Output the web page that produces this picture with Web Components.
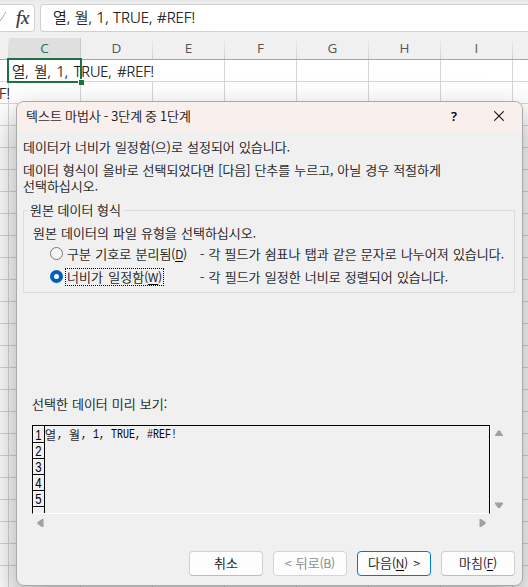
<!DOCTYPE html>
<html lang="ko">
<head>
<meta charset="utf-8">
<title>텍스트 마법사</title>
<style>
html,body{margin:0;height:100%;overflow:hidden}
body{background:#fff;font-family:"Noto Sans","Noto Sans CJK KR",sans-serif;color:#000}
</style>
</head>
<body>
<sheet-app></sheet-app>
<script>
const KR = '"Noto Sans CJK KR",sans-serif';
function define(name, html, setup) {
  const template = document.createElement('template');
  template.innerHTML = html;
  customElements.define(name, class extends HTMLElement {
    connectedCallback() {
      if (this.shadowRoot) return;
      this.attachShadow({mode: 'open'}).append(template.content.cloneNode(true));
      if (setup) setup(this, this.shadowRoot);
    }
  });
}

/* One line of text spread over a given width through its word gaps. */
define('text-line', `<style>
:host{display:block;white-space:nowrap;line-height:16px}
span{display:inline-block}
</style><span><slot></slot></span>`, (host, root) => {
  const span = root.querySelector('span');
  const width = +host.getAttribute('width');
  if (!width) return;
  const text = host.textContent.trim();
  const gaps = (text.match(/ /g) || []).length;
  const rest = width - span.getBoundingClientRect().width;
  if (gaps) span.style.wordSpacing = rest / gaps + 'px';
  else span.style.letterSpacing = rest / text.length + 'px';
});

/* Fixed-pitch text: 6px for a Latin character, 12px for a Hangul one. */
define('mono-text', `<style>
:host{display:flex;white-space:pre;height:17px;align-items:center}
span{font:10px/17px "Liberation Mono",monospace;transform:scaleY(1.35)}
b{width:12px;font:300 12px/17px "Noto Sans CJK KR",sans-serif;-webkit-text-stroke:.2px}
</style><b>열</b><span>, </span><b>월</b><span>, 1, TRUE, #REF!</span>`);

define('formula-bar', `<style>
:host{display:flex;gap:5px;height:39px;box-sizing:border-box;padding-top:4px;background:linear-gradient(#e8e8e8,#f0f0f0 4px)}
div{height:28px;box-sizing:border-box;border:1px solid #d1d1d1;background:#fff;display:flex;align-items:center}
.fx{width:35px;border-left:0;border-radius:0 4px 4px 0}
.in{flex:1;border-right:0;border-radius:4px 0 0 4px;padding:0 0 2px 12px;font:300 15px "Open Sans","Noto Sans CJK KR",sans-serif;-webkit-text-stroke:.2px;color:#000}
svg{display:block}
i{font:italic 19px "Liberation Serif",serif;color:#333;letter-spacing:-.3px;margin-left:9px;line-height:20px;-webkit-text-stroke:.2px}
</style><div class="fx"><svg width="7" height="12" viewBox="0 0 7 12"><path d="M-3 8L0 11 6 2" transform="translate(0 -2)" fill="none" stroke="#aaa"/></svg><i>fx</i></div>
<div class="in"><text-line width="142">열, 월, 1, TRUE, #REF!</text-line></div>`);

define('column-head', `<style>
:host{display:flex;justify-content:center;align-items:center;height:21px;padding:0 1px 2px 0;box-sizing:border-box;font:13.5px "Open Sans",sans-serif;color:#555;background:linear-gradient(#f0f0f0,#cfcfcf) right/1px 100% no-repeat}
:host([selected]){background:linear-gradient(#c8c8c8,#c8c8c8) right/1px 100% no-repeat,#dfdfdf;color:#217346}
</style><slot></slot>`);

define('sheet-grid', `<style>
:host{display:block;flex:1;background:#fff}
.heads{display:grid;grid-template-columns:9px repeat(8,72px);background:#f0f0f0;border-bottom:1px solid #a6a6a6}
.cells{position:relative;height:527px;font:300 14.5px "Open Sans","Noto Sans CJK KR",sans-serif;-webkit-text-stroke:.2px;background:linear-gradient(transparent 21px,#d6d6d6 21px) 0 0/100% 22px,linear-gradient(90deg,transparent 71px,#d6d6d6 71px) 9px 0/72px 100%}
.ref{display:flex;flex-direction:column;height:44px;width:165px}
.row{height:22px;padding-top:2px;box-sizing:border-box;display:flex;align-items:center}
.mask{background:linear-gradient(#fff,#fff) 78px 0/76px 21px no-repeat;padding-left:12px}
.sel{position:absolute;left:7px;top:-2px;width:71px;height:21px;border:2px solid #1e7145}
.sel::after{content:"";position:absolute;right:-4px;bottom:-4px;width:5px;height:5px;background:#1e7145;border:solid #fff;border-width:1px 0 0 1px}
</style><div class="heads"><column-head></column-head><column-head selected>C</column-head><column-head>D</column-head><column-head>E</column-head><column-head>F</column-head><column-head>G</column-head><column-head>H</column-head><column-head>I</column-head><column-head></column-head></div>
<div class="cells"><div class="ref"><div class="row mask"><text-line width="142">열, 월, 1, TRUE, #REF!</text-line></div><div class="row"><text-line width="11" style="margin-left:-1px">F!</text-line></div></div><div class="sel"></div></div>`);

define('title-bar', `<style>
:host{display:flex;align-items:center;height:30px;padding:0 18px 2px 9px;box-sizing:border-box;background:#f9f0ee}
text-line{flex:1}
b{font:600 13px "Noto Sans",sans-serif;margin-right:37px;-webkit-text-stroke:0}
</style><text-line width="165">텍스트 마법사 - 3단계 중 1단계</text-line><b>?</b><svg width="10" height="10"><path d="M.3.3l9.4 9.4M9.7.3L.3 9.7" stroke="#111" stroke-width="1.1"/></svg>`);

define('radio-choice', `<style>
:host{display:grid;grid-template-columns:17px 133px 1fr;align-items:center;height:23px}
i{box-sizing:border-box;width:13px;height:13px;border:1px solid #777;border-radius:50%;background:#f6f6f6}
:host([checked]) i{border:4px solid #005fb8;background:#fff}
.l{justify-self:start;padding:0 1px;height:18px;box-sizing:border-box;margin-left:-2px;border:1px solid transparent;display:flex;align-items:center}
:host([checked]) .l{border:1px dotted #000}
</style><i></i><div class="l"><slot name="label"></slot></div><slot></slot>`);

define('group-box', `<style>
:host{display:block;position:relative;height:83px;box-sizing:border-box;border:1px solid #dcdcdc;padding:14px 0 0 9px}
.legend{position:absolute;top:-9px;left:4px;padding:0 2px;background:#f0f0f0}
</style><div class="legend"><slot name="legend"></slot></div><slot></slot>`);

define('data-preview', `<style>
:host{display:grid;grid-template-columns:458px 18px;grid-template-rows:89px 17px;-webkit-text-stroke:0}
.box{border:1px solid #000;border-bottom:1px solid #fff;box-shadow:1px 0 #fff;display:grid;grid-template-columns:12px 1fr;overflow:hidden}
.nums{border-right:1px solid #000;height:88px;overflow:hidden;box-sizing:border-box}
.nums div{box-sizing:border-box;height:16px;border-bottom:1px solid #000;text-align:center;box-shadow:inset 1px 1px #fff;padding-top:2px}
.nums div:first-child{height:17px;padding-top:3px}
.nums div:last-child{border:0}
.nums span{display:block;font:12px/13px "Liberation Sans",sans-serif;transform:scale(.95,1.2)}
.v{display:flex;flex-direction:column;justify-content:space-between;align-items:center;padding:5px 0 5px;box-sizing:border-box}
.h{display:flex;justify-content:space-between;align-items:center;padding:0 4px 0 5px}
path{fill:#a0a0a0}svg{display:block}
</style><div class="box"><div class="nums"><div><span>1</span></div><div><span>2</span></div><div><span>3</span></div><div><span>4</span></div><div><span>5</span></div><div></div></div><mono-text></mono-text></div>
<div class="v"><svg width="8" height="7"><path d="M3 .5h2L8 5.2V6H0v-.8z"/></svg><svg width="8" height="7"><path d="M3 6h2l3-4.2V.5H0v1.3z"/></svg></div>
<div class="h"><svg width="7" height="8"><path d="M.5 3v2L5 8h1.5V0H5z"/></svg><svg width="7" height="8"><path d="M6.5 3v2L2 8H.5V0H2z"/></svg></div>`);

define('push-button', `<style>
:host{display:flex;justify-content:center;align-items:center;width:74px;height:25px;padding-bottom:1px;box-sizing:border-box;border:1px solid #d0d0d0;border-bottom-color:#bcbcbc;border-radius:4px;background:#fdfdfd}
:host([primary]){border-color:#0078d4}
:host([disabled]){color:#777;border-color:#d4d4d4}
</style><slot></slot>`);

define('wizard-dialog', `<style>
:host{position:absolute;left:16px;top:101px;width:507px;height:485px;box-sizing:border-box;border:1px solid #aaa;border-radius:8px;background:#f0f0f0;overflow:hidden;box-shadow:0 15px 32px 2px rgba(0,0,0,.34);font:300 13px/16px ${KR};-webkit-text-stroke:.2px}
.body{padding:7px 7px 0 6px;display:flex;flex-direction:column}
u{text-underline-offset:2px;text-decoration-thickness:1px}
.l{font-size:12px}
.second{margin:7px 0 16px}
group-box{width:492px}
.preview{margin:103px 0 0 9px}
data-preview{margin-top:13px}
.buttons{display:flex;justify-content:flex-end;gap:10px;margin-top:20px}
</style><title-bar></title-bar><div class="body">
<text-line width="267">데이터가 너비가 일정함(으)로 설정되어 있습니다.</text-line>
<div class="second"><text-line width="418">데이터 형식이 올바로 선택되었다면 [다음] 단추를 누르고, 아닐 경우 적절하게</text-line><text-line width="75">선택하십시오.</text-line></div>
<group-box><text-line slot="legend" width="91">원본 데이터 형식</text-line>
<text-line width="223">원본 데이터의 파일 유형을 선택하십시오.</text-line>
<div style="padding:1px 0 0 17px"><radio-choice><text-line slot="label" width="120">구분 기호로 분리됨<span class="l">(<u>D</u>)</span></text-line><text-line width="304">- 각 필드가 쉼표나 탭과 같은 문자로 나누어져 있습니다.</text-line></radio-choice>
<radio-choice checked><text-line slot="label" width="95">너비가 일정함<span class="l">(<u>W</u>)</span></text-line><text-line width="248">- 각 필드가 일정한 너비로 정렬되어 있습니다.</text-line></radio-choice></div></group-box>
<div class="preview"><text-line width="135">선택한 데이터 미리 보기:</text-line><data-preview></data-preview></div>
<div class="buttons"><push-button><text-line>취소</text-line></push-button><push-button disabled><text-line width="50"><span class="l">&lt;</span> 뒤로<span class="l">(B)</span></text-line></push-button><push-button primary><text-line width="52">다음<span class="l">(<u>N</u>)</span> <span class="l">&gt;</span></text-line></push-button><push-button><text-line width="38">마침<span class="l">(<u>F</u>)</span></text-line></push-button></div>
</div>`);

define('sheet-app', `<style>
:host{display:flex;flex-direction:column;position:relative;width:528px;height:587px;overflow:hidden}
</style><formula-bar></formula-bar><sheet-grid></sheet-grid><wizard-dialog></wizard-dialog>`);
</script>
</body>
</html>
